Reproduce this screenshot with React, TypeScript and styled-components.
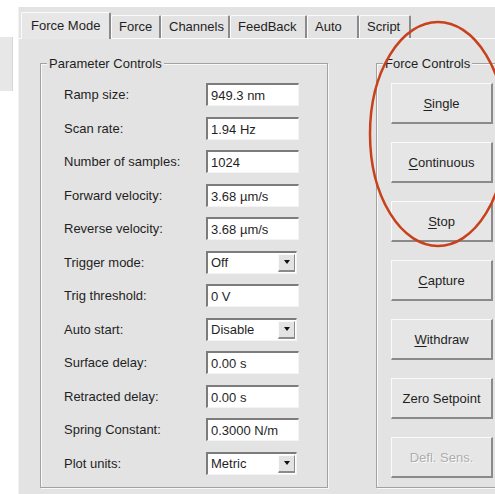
import * as React from 'react';
import styled, { createGlobalStyle } from 'styled-components';

const FACE = '#e3e3e3';
const TEXT = '#1f1f1f';
const SHADOW = '#8a8a8a';

const GlobalStyle = createGlobalStyle`
  html, body {
    margin: 0;
    padding: 0;
    background: #ffffff;
  }
  body {
    font-family: 'Liberation Sans', Arial, sans-serif;
    font-size: 13px;
    color: ${ TEXT };
  }
`;

const Page = styled.div`
  position: relative;
  width: 495px;
  height: 494px;
  display: flex;
  overflow: hidden;
  background: #ffffff;
`;

const Stub = styled.div`
  flex-shrink: 0;
  width: 12px;
  height: 54px;
  margin-top: 37px;
  background: #e7e7e7;
  border-right: 1px solid #d6d6d6;
`;

const Dialog = styled.div`
  flex: 1;
  margin: 7px 0 0 5px;
  display: flex;
  flex-direction: column;
  background: ${ FACE };
  border-left: 1px solid #f2f2f2;
  min-width: 0;
`;

const TabStrip = styled.div`
  height: 31px;
  display: flex;
  align-items: flex-end;
  padding-left: 2px;
`;

const Tab = styled.div<{ $active?: boolean; $width: number }>`
  position: relative;
  z-index: ${ p => p.$active ? 1 : 0 };
  box-sizing: border-box;
  width: ${ p => p.$width }px;
  height: ${ p => p.$active ? 27 : 23 }px;
  margin-bottom: ${ p => p.$active ? -1 : 0 }px;
  padding: ${ p => p.$active ? '5px 0 0 9px' : '3px 0 0 7px' };
  background: ${ p => p.$active ? '#e7e7e7' : FACE };
  border-top: 1px solid #fbfbfb;
  border-left: 1px solid #fbfbfb;
  border-right: 2px solid ${ SHADOW };
  border-radius: 2px 2px 0 0;
  white-space: nowrap;
  line-height: 16px;
`;

const TabPage = styled.div`
  flex: 1;
  display: flex;
  gap: 48px;
  padding: 17px 0 6px 21px;
  border-top: 1px solid #fbfbfb;
  overflow: hidden;
`;

const Group = styled.fieldset<{ $width: number }>`
  flex-shrink: 0;
  box-sizing: border-box;
  width: ${ p => p.$width }px;
  margin: 0;
  padding: 0;
  border: 1px solid #a2a2a2;
  box-shadow: inset 1px 1px 0 #f8f8f8, 1px 1px 0 #f8f8f8;
`;

const Legend = styled.legend`
  margin-left: 6px;
  padding: 0 2px;
  line-height: 15px;
  background: ${ FACE };
`;

const ParamGrid = styled.div`
  display: grid;
  grid-template-columns: 142px 93px;
  grid-auto-rows: 23px;
  row-gap: 10.5px;
  padding: 12px 0 0 23px;
`;

const Label = styled.span`
  align-self: center;
  white-space: nowrap;
`;

const Field = styled.input`
  box-sizing: border-box;
  width: 93px;
  height: 23px;
  margin: 0;
  padding: 1px 0 0 3px;
  font: inherit;
  color: ${ TEXT };
  background: #ffffff;
  border-top: 2px solid #7c7c7c;
  border-left: 2px solid #7c7c7c;
  border-right: 1px solid #f4f4f4;
  border-bottom: 1px solid #f4f4f4;
  outline: none;
`;

const Combo = styled.div`
  box-sizing: border-box;
  width: 91px;
  height: 23px;
  display: flex;
  align-items: center;
  justify-content: space-between;
  padding: 0 1px 0 3px;
  background: #ffffff;
  border-top: 2px solid #7c7c7c;
  border-left: 2px solid #7c7c7c;
  border-right: 1px solid #f4f4f4;
  border-bottom: 1px solid #f4f4f4;
`;

const ComboArrow = styled.span`
  box-sizing: border-box;
  width: 17px;
  height: 18px;
  display: flex;
  align-items: center;
  justify-content: center;
  background: ${ FACE };
  border-top: 1px solid #fafafa;
  border-left: 1px solid #fafafa;
  border-right: 1px solid ${ SHADOW };
  border-bottom: 2px solid ${ SHADOW };

  &::after {
    content: '';
    border-left: 3.5px solid transparent;
    border-right: 3.5px solid transparent;
    border-top: 4px solid #111;
  }
`;

const ButtonColumn = styled.div`
  display: flex;
  flex-direction: column;
  gap: 18px;
  padding: 12px 0 0 14px;
`;

const Button = styled.div<{ $disabled?: boolean }>`
  box-sizing: border-box;
  width: 102px;
  height: 41px;
  display: flex;
  align-items: center;
  justify-content: center;
  background: #e6e6e6;
  border-top: 1px solid #fafafa;
  border-left: 1px solid #fafafa;
  border-right: 2px solid ${ SHADOW };
  border-bottom: 2px solid ${ SHADOW };
  color: ${ p => p.$disabled ? '#adadad' : TEXT };
  text-shadow: ${ p => p.$disabled ? '1px 1px 0 #fbfbfb' : 'none' };
  white-space: nowrap;

  u {
    text-underline-offset: 2px;
  }
`;

const Annotation = styled.svg`
  position: absolute;
  left: 0;
  top: 0;
  pointer-events: none;
`;

const tabs = [
  { name: 'Force Mode', width: 90, active: true },
  { name: 'Force', width: 50 },
  { name: 'Channels', width: 69 },
  { name: 'FeedBack', width: 77 },
  { name: 'Auto', width: 52 },
  { name: 'Script', width: 52 },
];

const params: { label: string; value: string; combo?: boolean }[] = [
  { label: 'Ramp size:', value: '949.3 nm' },
  { label: 'Scan rate:', value: '1.94 Hz' },
  { label: 'Number of samples:', value: '1024' },
  { label: 'Forward velocity:', value: '3.68 µm/s' },
  { label: 'Reverse velocity:', value: '3.68 µm/s' },
  { label: 'Trigger mode:', value: 'Off', combo: true },
  { label: 'Trig threshold:', value: '0 V' },
  { label: 'Auto start:', value: 'Disable', combo: true },
  { label: 'Surface delay:', value: '0.00 s' },
  { label: 'Retracted delay:', value: '0.00 s' },
  { label: 'Spring Constant:', value: '0.3000 N/m' },
  { label: 'Plot units:', value: 'Metric', combo: true },
];

// first letter is the mnemonic unless noKey is set
const actions: { text: string; noKey?: boolean; disabled?: boolean }[] = [
  { text: 'Single' },
  { text: 'Continuous' },
  { text: 'Stop' },
  { text: 'Capture' },
  { text: 'Withdraw' },
  { text: 'Zero Setpoint', noKey: true },
  { text: 'Defl. Sens.', noKey: true, disabled: true },
];

export default function App() {
  return (
    <>
      <GlobalStyle />
      <Page>
        <Stub />
        <Dialog>
          <TabStrip>
            { tabs.map(tab => (
              <Tab key={ tab.name } $active={ tab.active } $width={ tab.width }>
                { tab.name }
              </Tab>
            )) }
          </TabStrip>
          <TabPage>
            <Group $width={ 288 }>
              <Legend>Parameter Controls</Legend>
              <ParamGrid>
                { params.map(p => (
                  <React.Fragment key={ p.label }>
                    <Label>{ p.label }</Label>
                    { p.combo ? (
                      <Combo>
                        <span>{ p.value }</span>
                        <ComboArrow />
                      </Combo>
                    ) : (
                      <Field readOnly value={ p.value } />
                    ) }
                  </React.Fragment>
                )) }
              </ParamGrid>
            </Group>
            <Group $width={ 140 }>
              <Legend>Force Controls</Legend>
              <ButtonColumn>
                { actions.map(a => (
                  <Button key={ a.text } $disabled={ a.disabled }>
                    { a.noKey ? a.text : <><u>{ a.text[0] }</u>{ a.text.slice(1) }</> }
                  </Button>
                )) }
              </ButtonColumn>
            </Group>
          </TabPage>
        </Dialog>
        <Annotation width={ 495 } height={ 494 }>
          <ellipse cx={ 438 } cy={ 134 } rx={ 68 } ry={ 112 } fill="none" stroke="#c9401c" strokeWidth={ 2.5 } />
        </Annotation>
      </Page>
    </>
  );
}
